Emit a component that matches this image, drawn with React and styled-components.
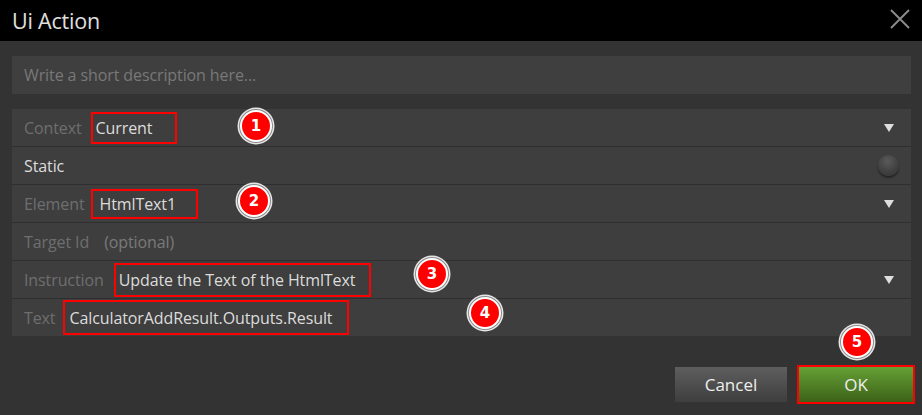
import React from 'react';
import styled, { createGlobalStyle } from 'styled-components';

const GlobalStyle = createGlobalStyle`
  html, body {
    margin: 0;
    padding: 0;
    background: #333333;
  }
  body {
    font-family: "Open Sans", "Noto Sans", sans-serif;
  }
`;

const Dialog = styled.div`
  position: relative;
  width: 922px;
  height: 415px;
  background: #333333;
  display: flex;
  flex-direction: column;
`;

const TitleBar = styled.div`
  height: 41px;
  background: #000;
  display: flex;
  align-items: center;
  justify-content: space-between;
  padding: 0 12px;
  h1 {
    margin: 0;
    font-size: 21.5px;
    font-weight: 400;
    color: #e0e0e0;
    letter-spacing: -0.2px;
  }
`;

const CloseButton = styled.button`
  width: 24px;
  height: 24px;
  padding: 0;
  border: none;
  background: transparent;
  margin-right: -2px;
  margin-top: -2px;
  cursor: pointer;
`;

const Body = styled.div`
  padding: 15px 11px 0 12px;
  display: flex;
  flex-direction: column;
  gap: 15px;
`;

const Description = styled.input`
  height: 38px;
  box-sizing: border-box;
  border: none;
  background: #3f3f3f;
  color: #dcdcdc;
  padding: 0 12px;
  font-family: inherit;
  font-size: 16px;
  letter-spacing: -0.1px;
  &::placeholder {
    color: #787878;
  }
  &:focus {
    outline: none;
  }
`;

const Panel = styled.div`
  background: #3e3e3e;
  display: flex;
  flex-direction: column;
`;

const Row = styled.div`
  height: 37px;
  display: flex;
  align-items: center;
  padding: 0 12px;
  border-bottom: 1px solid #2f2f2f;
  &:last-child {
    border-bottom: none;
  }
`;

const Label = styled.span`
  font-size: 16px;
  letter-spacing: -0.1px;
  color: ${p => (p.$bright ? '#dcdcdc' : '#6e6e6e')};
  margin-right: ${p => p.$gap || 7}px;
  white-space: nowrap;
`;

const Value = styled.span`
  font-size: 16px;
  letter-spacing: -0.1px;
  color: #dcdcdc;
  white-space: nowrap;
  box-sizing: border-box;
  height: ${p => p.$h || 32}px;
  width: ${p => (p.$w ? p.$w + 'px' : 'auto')};
  display: flex;
  align-items: center;
  padding-left: ${p => p.$pad || 3}px;
  border: 2px solid ${p => (p.$marked ? '#ff0000' : 'transparent')};
`;

const Hint = styled.span`
  font-size: 16px;
  letter-spacing: -0.1px;
  color: #7a7a7a;
  margin-left: 8px;
`;

const Spacer = styled.div`
  flex: 1;
`;

const Caret = styled.span`
  width: 0;
  height: 0;
  border-left: 5px solid transparent;
  border-right: 5px solid transparent;
  border-top: 8px solid #dedede;
  margin-right: 5px;
`;

const Knob = styled.span`
  width: 21px;
  height: 21px;
  border-radius: 50%;
  background: radial-gradient(circle at 45% 30%, #5a5a5a 0%, #3f3f3f 60%, #353535 100%);
  box-shadow: 0 2px 2px rgba(0, 0, 0, 0.45);
`;

const Footer = styled.div`
  margin-top: auto;
  display: flex;
  justify-content: flex-end;
  align-items: center;
  gap: 10px;
  padding: 0 9px 13px 0;
`;

const Button = styled.button`
  width: ${p => p.$w}px;
  height: 35px;
  border: none;
  color: #eeeeee;
  font-family: inherit;
  font-size: 17px;
  cursor: pointer;
  background: ${p =>
    p.$primary
      ? 'linear-gradient(#66a035, #3c6218)'
      : 'linear-gradient(#5e5e5e, #3e3e3e)'};
  ${p => p.$primary && 'outline: 2px solid #ff0000; outline-offset: 0; margin-left: 2px;'}
`;

const Badge = styled.span`
  position: absolute;
  left: ${p => p.$x - 16}px;
  top: ${p => p.$y - 16}px;
  width: 28px;
  height: 28px;
  border-radius: 50%;
  background: #ff0000;
  border: 2px solid #ffffff;
  box-shadow: 0 0 0 1px #8a8a8a, 0 0 0 2.5px #e6e6e6;
  display: flex;
  align-items: center;
  justify-content: center;
  color: #fff;
  font-family: "DejaVu Sans", Verdana, sans-serif;
  font-weight: 700;
  font-size: 15px;
  line-height: 1;
`;

const badges = [
  { n: 1, x: 256, y: 126 },
  { n: 2, x: 254, y: 201 },
  { n: 3, x: 432, y: 274 },
  { n: 4, x: 485, y: 313 },
  { n: 5, x: 857, y: 342 },
];

export default function App() {
  return (
    <>
      <GlobalStyle />
      <Dialog>
        <TitleBar>
          <h1>Ui Action</h1>
          <CloseButton aria-label="Close">
            <svg width="22" height="22" viewBox="0 0 22 22">
              <path d="M2 2 L20 20 M20 2 L2 20" stroke="#8a8a8a" strokeWidth="2" fill="none" />
            </svg>
          </CloseButton>
        </TitleBar>
        <Body>
          <Description placeholder="Write a short description here..." />
          <Panel>
            <Row>
              <Label $gap={9}>Context</Label>
              <Value $marked $w={86}>Current</Value>
              <Spacer />
              <Caret />
            </Row>
            <Row>
              <Label $bright>Static</Label>
              <Spacer />
              <Knob />
            </Row>
            <Row>
              <Label $gap={6}>Element</Label>
              <Value $marked $w={107} $h={30} $pad={7}>HtmlText1</Value>
              <Spacer />
              <Caret />
            </Row>
            <Row>
              <Label>Target Id</Label>
              <Hint>(optional)</Hint>
            </Row>
            <Row>
              <Label $gap={10}>Instruction</Label>
              <Value $marked $w={257} $h={34}>Update the Text of the HtmlText</Value>
              <Spacer />
              <Caret />
            </Row>
            <Row>
              <Label $gap={8}>Text</Label>
              <Value $marked $w={286} $h={35} $pad={4}>CalculatorAddResult.Outputs.Result</Value>
            </Row>
          </Panel>
        </Body>
        <Footer>
          <Button $w={112}>Cancel</Button>
          <Button $w={114} $primary>OK</Button>
        </Footer>
        {badges.map(b => (
          <Badge key={b.n} $x={b.x} $y={b.y}>{b.n}</Badge>
        ))}
      </Dialog>
    </>
  );
}
